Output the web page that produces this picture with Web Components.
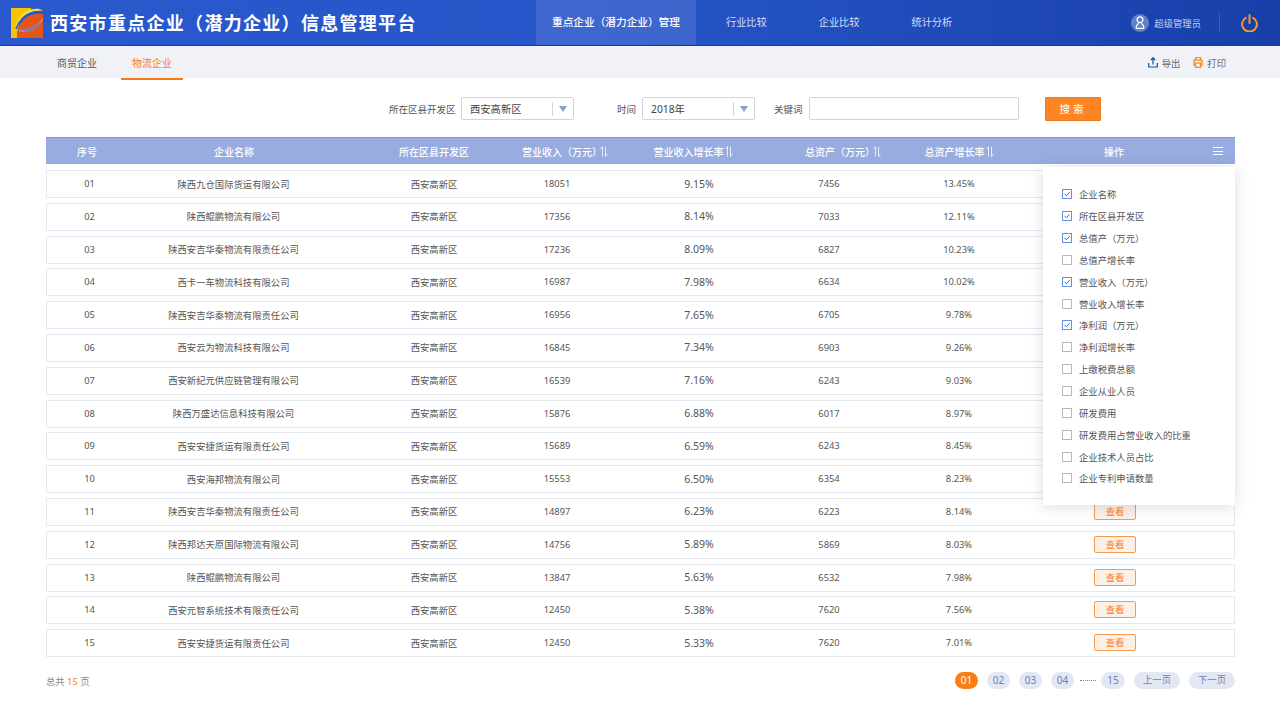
<!DOCTYPE html>
<html lang="zh-CN">
<head>
<meta charset="utf-8">
<title>西安市重点企业信息管理平台</title>
<style>
  html, body { margin: 0; height: 720px; overflow: hidden; background: #fff; }
  body { font-family: "Noto Sans", "Noto Sans CJK SC", sans-serif; color: #555; font-size: 9.33px; }
</style>
</head>
<body>
<app-header></app-header>
<sub-nav></sub-nav>
<filter-bar></filter-bar>
<data-table></data-table>
<page-footer></page-footer>
<script>
const rows = [
  ['01', '陕西九仓国际货运有限公司', '18051', '9.15%', '7456', '13.45%'],
  ['02', '陕西鲲鹏物流有限公司', '17356', '8.14%', '7033', '12.11%'],
  ['03', '陕西安吉华秦物流有限责任公司', '17236', '8.09%', '6827', '10.23%'],
  ['04', '西卡一车物流科技有限公司', '16987', '7.98%', '6634', '10.02%'],
  ['05', '陕西安吉华秦物流有限责任公司', '16956', '7.65%', '6705', '9.78%'],
  ['06', '西安云为物流科技有限公司', '16845', '7.34%', '6903', '9.26%'],
  ['07', '西安新纪元供应链管理有限公司', '16539', '7.16%', '6243', '9.03%'],
  ['08', '陕西万盛达信息科技有限公司', '15876', '6.88%', '6017', '8.97%'],
  ['09', '西安安捷货运有限责任公司', '15689', '6.59%', '6243', '8.45%'],
  ['10', '西安海邦物流有限公司', '15553', '6.50%', '6354', '8.23%'],
  ['11', '陕西安吉华秦物流有限责任公司', '14897', '6.23%', '6223', '8.14%'],
  ['12', '陕西邦达天原国际物流有限公司', '14756', '5.89%', '5869', '8.03%'],
  ['13', '陕西鲲鹏物流有限公司', '13847', '5.63%', '6532', '7.98%'],
  ['14', '西安元智系统技术有限责任公司', '12450', '5.38%', '7620', '7.56%'],
  ['15', '西安安捷货运有限责任公司', '12450', '5.33%', '7620', '7.01%']
];
const menuItems = [
  ['企业名称', 1], ['所在区县开发区', 1], ['总值产（万元）', 1], ['总值产增长率', 0],
  ['营业收入（万元）', 1], ['营业收入增长率', 0], ['净利润（万元）', 1], ['净利润增长率', 0],
  ['上缴税费总额', 0], ['企业从业人员', 0], ['研发费用', 0], ['研发费用占营业收入的比重', 0],
  ['企业技术人员占比', 0], ['企业专利申请数量', 0]
];

class BaseElement extends HTMLElement {
  constructor() {
    super();
    this._shadow = this.attachShadow({mode: 'open'});
    this._shadow.innerHTML = this._getHTML();
  }
}

class AppHeader extends BaseElement {
  _getHTML() {
    return `<style>
      :host { display: flex; height: 45px; border-bottom: 1px solid #0f3bab; background: linear-gradient(90deg, #2a59ce 0%, #2655c8 50%, #183fa9 100%); color: #fff; align-items: stretch; }
      .logo { margin: 8px 7px 0 11px; width: 32px; height: 30px; flex: none; }
      h1 { margin: 0; font-size: 18px; font-weight: 700; letter-spacing: 1.3px; line-height: 47px; white-space: nowrap; width: 486px; flex: none; }
      nav { display: flex; flex: none; }
      nav a { font-size: 10.2px; line-height: 45px; color: #d5dff7; white-space: nowrap; }
      nav a.on { font-size: 10.67px; width: 160px; text-align: center; background: rgba(255,255,255,.11); color: #fff; font-weight: 500; margin-right: 30px; }
      nav a.n2 { margin-right: 52px; }
      .user { margin-left: auto; display: flex; align-items: center; font-size: 9.33px; color: #c3d0f0; }
      .user span { margin: 0 18px 0 5px; }
      .avatar { width: 18px; height: 18px; border-radius: 50%; background: #6481c8; display: flex; align-items: center; justify-content: center; }
      .sep { width: 1px; height: 19px; background: #3a5fbe; }
      .power { margin: 0 22px 0 21px; display: block; }
    </style>
    <svg class="logo" viewBox="0 0 32 30">
      <path d="M0 0H20V3C12 6 7 14 6 30H0Z" fill="#f7c404"/>
      <path d="M6 30C6 20 10 10 20 7C24 6 28 5.500 32 6V30Z" fill="#e2551b"/>
      <path d="M4 21C5 12 11 4 20 1.500C24 .5 29 .5 32 2.500C26 2.500 21 3.500 17 5.500C11 8.500 7 14 4 21Z" fill="#f7dc3c"/>
      <path d="M5 21C8 13 13 7.500 20 5C24 3.800 28 3.500 32 4.500" fill="none" stroke="#1f5bd6" stroke-width="1.600"/>
      <path d="M8 22.500C14 25.500 27 22 32 10.500C27 18 16 23.500 8 22.500Z" fill="#2a62dc" stroke="#cfe0ff" stroke-width=".4"/>
    </svg>
    <h1>西安市重点企业（潜力企业）信息管理平台</h1>
    <nav>
      <a class="on">重点企业（潜力企业）管理</a>
      <a class="n2">行业比较</a><a class="n2">企业比较</a><a>统计分析</a>
    </nav>
    <div class="user">
      <div class="avatar"><svg width="10" height="13" viewBox="0 0 10 13" fill="none" stroke="#fff" stroke-width="1.300"><circle cx="5" cy="3.800" r="2.900"/><path d="M1 12.300C1 9.500 2.500 8 3.600 7.200M9 12.300C9 9.500 7.500 8 6.400 7.200M1 12.300H9"/></svg></div>
      <span>超级管理员</span>
      <div class="sep"></div>
      <svg class="power" width="17" height="18" viewBox="0 0 17 18" fill="none" stroke="#f5982a" stroke-width="2" stroke-linecap="round"><path d="M4.800 3.800A7.400 7.400 0 1 0 12.200 3.800"/><path d="M8.500 1V9"/></svg>
    </div>`;
  }
}

class SubNav extends BaseElement {
  _getHTML() {
    return `<style>
      :host { display: flex; height: 32px; background: #f1f2f7; align-items: stretch; font-size: 10px; position: relative; }
      a { line-height: 35px; color: #555; width: 62px; text-align: center; white-space: nowrap; }
      a.one { margin-left: 46px; margin-right: 13px; }
      a.on { color: #f77f17; border-bottom: 2px solid #f77b12; height: 32px; box-sizing: content-box; }
      .tools { margin-left: auto; display: flex; align-items: center; margin-right: 54px; padding-top: 1px; color: #666; font-size: 9.33px; }
      .tools svg { margin-right: 4px; display: block; }
      .tools span { margin-right: 13px; }
      .tools span:last-child { margin-right: 0; }
    </style>
    <a class="one">商贸企业</a><a class="on">物流企业</a>
    <div class="tools">
      <svg width="10" height="11" viewBox="0 0 10 11" fill="none" stroke="#1d4aa0" stroke-width="1.200"><path d="M5 7.500V1M2.800 3L5 .8 7.200 3M.7 6V10H9.300V6"/></svg><span>导出</span>
      <svg width="10" height="11" viewBox="0 0 10 11" fill="none" stroke="#f5892b" stroke-width="1.300"><path d="M2.500 3V.7H7.500V3M2.300 8H1V3.200H9V8H7.700"/><rect x="2.500" y="6" width="5" height="4.300"/></svg><span>打印</span>
    </div>`;
  }
}

class SelectBox extends HTMLElement {
  constructor() {
    super();
    const shadow = this.attachShadow({mode: 'open'});
    shadow.innerHTML = `<style>
      :host { display: flex; width: 113px; height: 23px; box-sizing: border-box; border: 1px solid #cfd4e3; border-radius: 2px; align-items: center; font-size: 10.3px; color: #444; background: #fff; }
      span { flex: 1; padding-left: 8px; white-space: nowrap; }
      i { width: 1px; height: 14px; background: #cfd4e3; }
      b { width: 0; height: 0; margin: 0 6px 0 6px; border: 4px solid transparent; border-top: 6px solid #8d9fc5; border-bottom: 0; }
    </style><span><slot></slot></span><i></i><b></b>`;
  }
}

class FilterBar extends BaseElement {
  _getHTML() {
    return `<style>
      :host { display: flex; align-items: center; height: 24px; margin-top: 18.500px; padding-left: 389px; font-size: 9.500px; color: #555; white-space: nowrap; }
      label { margin-right: 5.500px; }
      label.t { margin-left: 43px; margin-right: 6px; }
      label.k { margin-left: 19px; margin-right: 6.500px; }
      .input { width: 210px; height: 23px; box-sizing: border-box; border: 1px solid #cfd4e3; border-radius: 2px; }
      .search { margin-left: 26px; width: 56px; height: 24px; background: #fd8524; border: 1px solid #ef7a1c; box-sizing: border-box; border-radius: 1px; color: #fff; font-size: 10.67px; text-align: center; line-height: 23px; letter-spacing: 3px; }
    </style>
    <label>所在区县开发区</label><select-box>西安高新区</select-box>
    <label class="t">时间</label><select-box>2018年</select-box>
    <label class="k">关键词</label><div class="input"></div>
    <div class="search">搜索</div>`;
  }
}

class DataTable extends BaseElement {
  _getHTML() {
    const sortIcon = `<svg width="8" height="11" viewBox="0 0 8 11" fill="none" stroke="#e6ebfa" stroke-width="1"><path d="M2.500 10.500V.5L.5 3M5.500 .5V10.500L7.500 8"/></svg>`;
    const head = [
      ['序号', 0], ['企业名称', 0], ['所在区县开发区', 0], ['营业收入（万元）', 2],
      ['营业收入增长率', 1], ['总资产（万元）', 2], ['总资产增长率', 1], ['操作', 0]
    ].map(([t, s]) => `<div class="hc${s === 2 ? ' tight' : ''}">${t}${s ? sortIcon : ''}</div>`).join('');
    // the first ten action buttons lie fully under the column menu, so they stay empty
    const body = rows.map((r, i) => `<div class="row">
      <span class="c1">${r[0]}</span><span class="c2">${r[1]}</span><span class="c3">西安高新区</span><span class="c4">${r[2]}</span>
      <span class="c5">${r[3]}</span><span class="c6">${r[4]}</span><span class="c7">${r[5]}</span>
      <span class="c8">${i > 9 ? '<a>查看</a>' : ''}</span></div>`).join('');
    return `<style>
      :host { display: block; margin: 16.500px 45px 0 46px; position: relative; }
      .head { display: grid; grid-template-columns: 82px 212px 188px 74px 182px 118px 114px 196px; height: 27px; box-sizing: border-box; background: #98ace0; border-top: 1px solid #7d95dc; align-items: center; color: #fff; font-size: 10px; font-weight: 500; white-space: nowrap; position: relative; }
      .hc { display: flex; justify-content: center; align-items: center; gap: 1px; }
      .hc svg { flex: none; }
      .hc.tight { gap: 0; }
      .hc.tight svg { margin-left: -2px; }
      .menu-btn { position: absolute; right: 12px; top: 9px; width: 10px; height: 8px; border-top: 1px solid #fff; border-bottom: 1px solid #fff; box-sizing: border-box; }
      .menu-btn::after { content: ""; display: block; height: 1px; background: #fff; margin-top: 2.500px; }
      .body { display: grid; grid-auto-rows: 28px; row-gap: 4.800px; margin-top: 6px; }
      .row { display: grid; grid-template-columns: 82px 212px 160px 120px 150px 120px 140px 1fr; box-sizing: border-box; height: 28px; padding-bottom: 1px; border: 1px solid #e5e7f1; align-items: center; text-align: center; white-space: nowrap; color: #555; }
      .c1 { padding-left: 3px; } .c2 { padding-right: 3px; } .c3 { padding-left: 26px; } .c4 { padding-right: 8px; } .c5 { padding-left: 6px; font-size: 10.500px; } .c6 { padding-right: 4px; } .c7 { padding-right: 4px; }
      .c8 { padding-right: 35px; }
      .c8 a { display: inline-block; width: 42px; height: 17px; box-sizing: border-box; border: 1px solid #f59a50; border-radius: 2px; background: #fdf0e6; color: #f77f17; line-height: 15px; }
    </style>
    <div class="head">${head}<div class="menu-btn"></div></div>
    <div class="body">${body}</div>
    <column-menu></column-menu>`;
  }
}

class ColumnMenu extends BaseElement {
  _getHTML() {
    const check = `<svg width="10" height="10" viewBox="0 0 10 10"><rect x=".5" y=".5" width="9" height="9" fill="#fff" stroke="#6a8fe6"/><path d="M2.500 4.800L4.400 6.800 7.600 3.200" fill="none" stroke="#3d6be0" stroke-width="1"/></svg>`;
    const empty = `<svg width="10" height="10" viewBox="0 0 10 10"><rect x=".5" y=".5" width="9" height="9" fill="#fff" stroke="#b9b9b9"/></svg>`;
    const items = menuItems.map(([t, c]) => `<li>${c ? check : empty}<span>${t}</span></li>`).join('');
    return `<style>
      :host { position: absolute; left: 997px; top: 29.500px; width: 192px; height: 338px; background: #fff; box-shadow: 0 2px 14px rgba(60,70,110,.18); box-sizing: border-box; padding: 17px 0 0 19px; }
      ul { list-style: none; margin: 0; padding: 0; display: grid; grid-auto-rows: 21.850px; }
      li { display: flex; align-items: center; font-size: 9.33px; color: #555; white-space: nowrap; }
      svg { flex: none; margin-right: 7px; display: block; }
    </style><ul>${items}</ul>`;
  }
}

class PageFooter extends BaseElement {
  _getHTML() {
    return `<style>
      :host { display: flex; align-items: center; margin: 15px 45px 0 46px; height: 17px; font-size: 9.33px; color: #888; white-space: nowrap; }
      b { font-weight: 400; color: #f77f17; }
      .pager { margin-left: auto; display: flex; align-items: center; font-size: 10px; }
      a { display: block; height: 17px; line-height: 16px; border-radius: 9px; background: #e3e7f4; color: #6d7fb5; width: 23px; text-align: center; margin-right: 9px; }
      a.on { background: #fa7d17; color: #fff; }
      a.l { width: 24px; }
      a.w { width: 46px; font-size: 9.33px; }
      a.w:last-child { margin-right: 0; }
      i { width: 16px; margin: 0 5px 0 -3px; height: 0; border-top: 1px dotted #6d7fb5; }
    </style>
    <span>总共 <b>15</b> 页</span>
    <div class="pager"><a class="on">01</a><a>02</a><a>03</a><a>04</a><i></i><a class="l">15</a><a class="w">上一页</a><a class="w">下一页</a></div>`;
  }
}

customElements.define('app-header', AppHeader);
customElements.define('sub-nav', SubNav);
customElements.define('select-box', SelectBox);
customElements.define('filter-bar', FilterBar);
customElements.define('column-menu', ColumnMenu);
customElements.define('data-table', DataTable);
customElements.define('page-footer', PageFooter);
</script>
</body>
</html>
